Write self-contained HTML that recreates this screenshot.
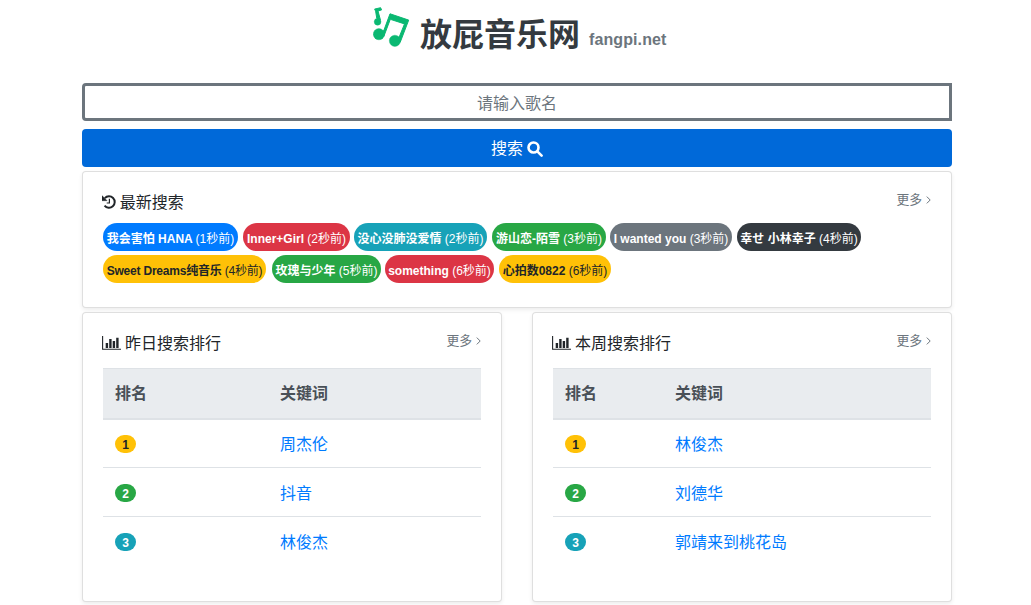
<!DOCTYPE html>
<html lang="zh-CN">
<head>
<meta charset="utf-8">
<title>放屁音乐网 fangpi.net</title>
<style>
*{box-sizing:border-box}
html,body{margin:0;padding:0;background:#fff}
body{width:1031px;height:605px;overflow:hidden;position:relative;
  font-family:"Liberation Sans","Noto Sans CJK SC",sans-serif;font-size:16px;line-height:1.5;color:#212529}
a{text-decoration:none;color:#007bff}
.abs{position:absolute}
/* header */
#logo{left:373px;top:7px;width:37px;height:40px}
#brand{left:420px;top:11px;font-size:32px;font-weight:700;color:#343a40;line-height:48px;white-space:nowrap;margin:0}
#sub{left:589px;top:27px;font-size:16px;font-weight:700;color:#6c757d;line-height:26px;white-space:nowrap;letter-spacing:0.1px}
/* search */
#q{left:82px;top:83px;width:870px;height:38px;border:3px solid #6c757d;border-radius:4px 0 0 4px;
  text-align:center;color:#6c757d;line-height:35px;background:#fff}
#btn{left:82px;top:129px;width:870px;height:38px;border-radius:4px;background:#0069d9;color:#fff;
  text-align:center;line-height:40px}
#btn svg{width:16px;height:16px;vertical-align:-3px;margin-left:4px}
/* cards */
.card{border:1px solid rgba(0,0,0,.125);border-radius:4px;background:#fff;box-shadow:0 2px 4px rgba(0,0,0,.075)}
#c1{left:82px;top:171px;width:870px;height:137px}
#c2{left:82px;top:312px;width:420px;height:290px}
#c3{left:532px;top:312px;width:420px;height:290px}
.hd{position:absolute;left:20px;right:20px;top:19px;height:24px;line-height:24px}
.hd .ttl{position:absolute;left:0;top:0;white-space:nowrap}
.hd .ttl svg{vertical-align:-1px}
.hd .ih{margin-left:-0.7px;margin-right:3.4px}
.hd .ib{margin-left:-0.9px;margin-right:3.8px}
.hd .more svg{margin-left:4px;vertical-align:0.5px}
.hd .more{position:absolute;right:0;top:-3px;font-size:12.8px;color:#6c757d;white-space:nowrap}
.badges{position:absolute;left:20px;top:51px;width:830px}
.bd{position:absolute;height:28px;border-radius:14px;font-size:12px;font-weight:700;line-height:32px;color:#fff;
  text-align:center;white-space:nowrap}
.bd span{font-weight:400}
.b-primary{background:#007bff}.b-danger{background:#dc3545}.b-info{background:#17a2b8}
.b-success{background:#28a745}.b-secondary{background:#6c757d}.b-dark{background:#343a40}
.b-warning{background:#ffc107;color:#212529}
table{position:absolute;left:20px;top:55px;width:378px;border-collapse:collapse;table-layout:fixed}
th,td{padding:0 12px;text-align:left;vertical-align:middle}
th{height:50px;padding-top:2px;background:#e9ecef;color:#495057;font-weight:700;border-bottom:2px solid #dee2e6;border-top:1px solid #dee2e6}
td{height:49px;border-top:1px solid #dee2e6}
.pill{display:inline-block;min-width:21px;height:18px;border-radius:10rem;font-size:12px;font-weight:700;line-height:20px;
  text-align:center;vertical-align:middle}
.pill.b-success,.pill.b-info{color:#fff}
td a{position:relative;top:1.5px;left:1px}
th+th{padding-left:13px}
</style>
</head>
<body>
<svg id="logo" class="abs" viewBox="0 0 37 40" aria-hidden="true">
  <g fill="#0ab872" stroke="#0ab872" stroke-linejoin="round">
    <circle cx="4.6" cy="14.8" r="3.4" stroke-width="0.4"/>
    <path d="M1.6 2.1 L7.6 0.7 L8.6 2.9 L5.0 4.0 L7.4 12.8 L3.8 11.5 L2.6 4.1 Z" stroke-width="1"/>
    <circle cx="5.9" cy="27.2" r="5.6" stroke-width="0.4"/>
    <circle cx="21.9" cy="33.8" r="5.6" stroke-width="0.4"/>
    <path d="M17.0 6.8 L35.7 13.1 L27.3 35 L25 33 L31.5 16.9 L17.3 12.3 L10.8 29.5 L7 27 L10.9 23.3 Z" stroke-width="1"/>
  </g>
</svg>
<h1 id="brand" class="abs">放屁音乐网</h1>
<div id="sub" class="abs">fangpi.net</div>

<div id="q" class="abs">请输入歌名</div>
<div id="btn" class="abs">搜索<svg viewBox="0 0 16 16" aria-hidden="true"><circle cx="6.5" cy="6.5" r="5" fill="none" stroke="#fff" stroke-width="2.6"/><path d="M10.3 10.3 L14.6 14.6" stroke="#fff" stroke-width="2.6" stroke-linecap="round"/></svg></div>

<div id="c1" class="abs card">
  <div class="hd">
    <div class="ttl"><svg class="ih" width="14" height="14" viewBox="0 0 14 14" aria-hidden="true"><path d="M2.8 3.15 A5.7 5.7 0 1 1 2.57 10.59" fill="none" stroke="#212529" stroke-width="2"/><path d="M0 0.6 L0 5.7 L5.1 5.7 Z" fill="#212529" stroke="#212529" stroke-width="0.4" stroke-linejoin="round"/><path d="M7.4 3.8 V8 H4.7" fill="none" stroke="#212529" stroke-width="1.2"/></svg>最新搜索</div>
    <a class="more">更多<svg width="5" height="8" viewBox="0 0 5 8" aria-hidden="true"><path d="M0.8 0.6 L4.2 4 L0.8 7.4" fill="none" stroke="#6c757d" stroke-width="1"/></svg></a>
  </div>
  <div class="badges">
    <a class="bd b-primary" style="left:0;top:0;width:135px">我会害怕 HANA <span>(1秒前)</span></a>
    <a class="bd b-danger" style="left:140px;top:0;width:107px">Inner+Girl <span>(2秒前)</span></a>
    <a class="bd b-info" style="left:251px;top:0;width:133px">没心没肺没爱情 <span>(2秒前)</span></a>
    <a class="bd b-success" style="left:389px;top:0;width:114px">游山恋-陌雪 <span>(3秒前)</span></a>
    <a class="bd b-secondary" style="left:507px;top:0;width:122px">I wanted you <span>(3秒前)</span></a>
    <a class="bd b-dark" style="left:634px;top:0;width:124px">幸せ 小林幸子 <span>(4秒前)</span></a>
    <a class="bd b-warning" style="left:0;top:32px;width:163px;letter-spacing:-0.21px">Sweet Dreams纯音乐 <span>(4秒前)</span></a>
    <a class="bd b-success" style="left:169px;top:32px;width:109px">玫瑰与少年 <span>(5秒前)</span></a>
    <a class="bd b-danger" style="left:282px;top:32px;width:109px">something <span>(6秒前)</span></a>
    <a class="bd b-warning" style="left:396px;top:32px;width:112px">心拍数0822 <span>(6秒前)</span></a>
  </div>
</div>

<div id="c2" class="abs card">
  <div class="hd">
    <div class="ttl"><svg class="ib" width="19" height="14" viewBox="0 0 19 14" aria-hidden="true"><path d="M0.6 0 V13.2 H19" fill="none" stroke="#212529" stroke-width="1.1"/><path d="M3.7 7h2.4v5H3.7zM7.2 3h2.4v9H7.2zM10.7 5h2.4v7h-2.4zM14.2 1.8h2.4V12h-2.4z" fill="#212529"/></svg>昨日搜索排行</div>
    <a class="more">更多<svg width="5" height="8" viewBox="0 0 5 8" aria-hidden="true"><path d="M0.8 0.6 L4.2 4 L0.8 7.4" fill="none" stroke="#6c757d" stroke-width="1"/></svg></a>
  </div>
  <table>
    <colgroup><col style="width:164px"><col></colgroup>
    <thead><tr><th>排名</th><th>关键词</th></tr></thead>
    <tbody>
      <tr><td><span class="pill b-warning">1</span></td><td><a>周杰伦</a></td></tr>
      <tr><td><span class="pill b-success">2</span></td><td><a>抖音</a></td></tr>
      <tr><td><span class="pill b-info">3</span></td><td><a>林俊杰</a></td></tr>
    </tbody>
  </table>
</div>

<div id="c3" class="abs card">
  <div class="hd">
    <div class="ttl"><svg class="ib" width="19" height="14" viewBox="0 0 19 14" aria-hidden="true"><path d="M0.6 0 V13.2 H19" fill="none" stroke="#212529" stroke-width="1.1"/><path d="M3.7 7h2.4v5H3.7zM7.2 3h2.4v9H7.2zM10.7 5h2.4v7h-2.4zM14.2 1.8h2.4V12h-2.4z" fill="#212529"/></svg>本周搜索排行</div>
    <a class="more">更多<svg width="5" height="8" viewBox="0 0 5 8" aria-hidden="true"><path d="M0.8 0.6 L4.2 4 L0.8 7.4" fill="none" stroke="#6c757d" stroke-width="1"/></svg></a>
  </div>
  <table>
    <colgroup><col style="width:109px"><col></colgroup>
    <thead><tr><th>排名</th><th>关键词</th></tr></thead>
    <tbody>
      <tr><td><span class="pill b-warning">1</span></td><td><a>林俊杰</a></td></tr>
      <tr><td><span class="pill b-success">2</span></td><td><a>刘德华</a></td></tr>
      <tr><td><span class="pill b-info">3</span></td><td><a>郭靖来到桃花岛</a></td></tr>
    </tbody>
  </table>
</div>
</body>
</html>
